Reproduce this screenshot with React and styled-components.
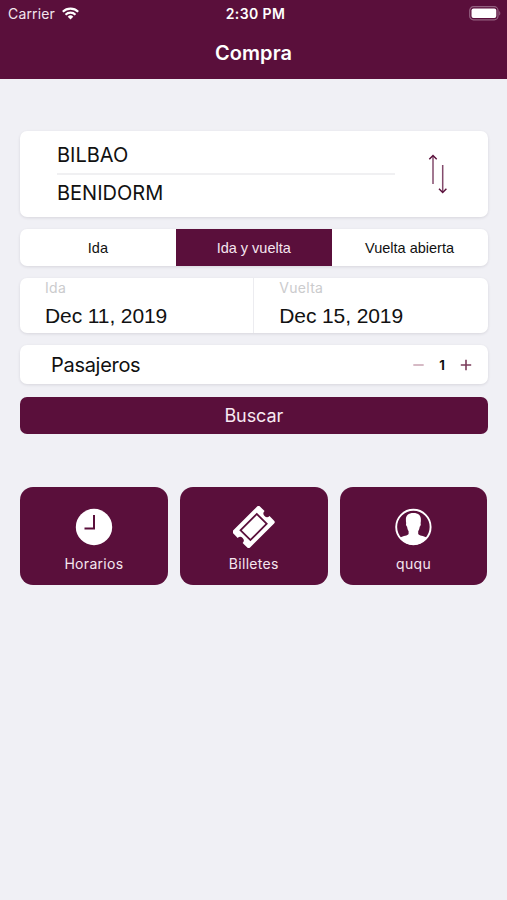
import React, { useState } from 'react';
import styled, { createGlobalStyle, css } from 'styled-components';

const BRAND = '#5a0f3b';
const SYSTEM_FONT = "Inter, 'Liberation Sans', sans-serif";
const HELVETICA = "'Liberation Sans', Arial, sans-serif";

const GlobalStyle = createGlobalStyle`
  * {
    box-sizing: border-box;
  }
  body {
    margin: 0;
    background: #f0f0f5;
    font-family: ${SYSTEM_FONT};
    color: #111;
  }
  button {
    border: 0;
    padding: 0;
    margin: 0;
    background: none;
    font: inherit;
    color: inherit;
  }
`;

const Screen = styled.div`
  min-height: 900px;
  background: #f0f0f5;
`;

const Header = styled.header`
  height: 79px;
  background: ${BRAND};
  color: #fff;
`;

const StatusBar = styled.div`
  display: grid;
  grid-template-columns: 1fr auto 1fr;
  align-items: center;
  height: 26px;
  padding: 0 6px 0 8px;
`;

const Carrier = styled.div`
  display: flex;
  align-items: center;
  gap: 7px;
  font-size: 14px;
  letter-spacing: 0.15px;
  color: #f3e6ee;
`;

const Clock = styled.div`
  font-size: 14px;
  font-weight: 600;
  letter-spacing: 0.4px;
  padding-left: 2px;
`;

const Battery = styled.svg`
  justify-self: end;
`;

const Title = styled.h1`
  margin: 0;
  line-height: 54px;
  font-size: 20px;
  font-weight: 600;
  letter-spacing: 0.1px;
  text-align: center;
`;

const Main = styled.main`
  display: flex;
  flex-direction: column;
  padding: 52px 19.5px 0 20px;
`;

const Card = styled.section`
  display: flex;
  background: #fff;
  border-radius: 7px;
  box-shadow: 0 1px 3px rgba(40, 30, 60, 0.12);
  margin-bottom: 12px;
`;

const RouteCard = styled(Card)`
  height: 86px;
  align-items: center;
  padding: 0 40px 0 37px;
  justify-content: space-between;
`;

const Stations = styled.div`
  width: 338px;
  padding-bottom: 2px;
`;

const Station = styled.div`
  height: 37px;
  line-height: 38px;
  font-size: 20px;

  & + & {
    border-top: 2px solid #f0f0f2;
    line-height: 36px;
  }
`;

const SegmentCard = styled(Card)`
  height: 37px;
  overflow: hidden;
`;

const Segment = styled.button`
  flex: 1;
  padding-top: 1px;
  font-family: ${HELVETICA};
  font-size: 14.5px;

  ${(p) => p.$active && css`
    background: ${BRAND};
    color: #f5e6ef;
  `}
`;

const DateCard = styled(Card)`
  height: 55px;
`;

const DateField = styled.div`
  flex: 1;
  padding-left: 25px;
  font-family: ${HELVETICA};

  & + & {
    border-left: 1px solid #ececf0;
  }
`;

const DateLabel = styled.div`
  height: 20px;
  line-height: 20px;
  font-family: ${SYSTEM_FONT};
  font-size: 14px;
  letter-spacing: 0.3px;
  color: #cbcbcd;
`;

const DateValue = styled.div`
  line-height: 35px;
  font-size: 21px;
  letter-spacing: -0.1px;
`;

const PassengerCard = styled(Card)`
  height: 39px;
  align-items: center;
  justify-content: space-between;
  padding: 0 15.5px 0 31px;
  font-size: 20px;
  letter-spacing: -0.3px;
`;

const Stepper = styled.div`
  display: flex;
  align-items: center;
  gap: 15.5px;
  font-size: 13px;
  font-weight: 700;
`;

const StepButton = styled.button`
  display: flex;
`;

const SearchButton = styled.button`
  height: 37px;
  border-radius: 7px;
  background: ${BRAND};
  color: #f8e9f2;
  margin-top: 1px;
  font-size: 18px;
  letter-spacing: -0.1px;
`;

const Tiles = styled.div`
  display: grid;
  grid-template-columns: repeat(3, 1fr);
  gap: 12px;
  margin-top: 53px;
`;

const Tile = styled.button`
  display: flex;
  flex-direction: column;
  align-items: center;
  height: 98px;
  padding-top: 19px;
  border-radius: 13px;
  background: ${BRAND};
  color: #f5e6ef;
  font-size: 14px;
  line-height: 22px;
  letter-spacing: 0.3px;

  svg {
    margin-bottom: 5px;
  }
`;

const WifiIcon = () => (
  <svg width="17" height="13" viewBox="0 0 17 13" fill="none" stroke="#fff" strokeWidth="2.1">
    <path d="M.8 4.8a10.9 10.9 0 0 1 15.4 0" />
    <path d="M3.5 7.7a7.1 7.1 0 0 1 10 0" />
    <path d="M8.5 12.5 5.7 9.7a4 4 0 0 1 5.6 0z" fill="#fff" stroke="none" />
  </svg>
);

const BatteryIcon = () => (
  <Battery width="32" height="15" viewBox="0 0 32 15">
    <rect x=".7" y=".7" width="28.3" height="13.1" rx="3.8" fill="none" stroke="#936180" strokeWidth="1.2" />
    <rect x="2.5" y="2.5" width="24.8" height="9.5" rx="2" fill="#fff" />
    <path d="M30.2 5v4.6c1.5-.7 1.5-3.9 0-4.6z" fill="#936180" />
  </Battery>
);

const SwapIcon = () => (
  <svg width="20" height="40" viewBox="0 0 20 40" fill="none" stroke={BRAND}>
    <path d="M5 2v28M14.7 11v27" strokeWidth="1.5" opacity=".75" />
    <path d="M1.3 5.3 5 1.4l3.7 3.9M11 34.7l3.7 3.9 3.7-3.9" strokeWidth="1.4" />
  </svg>
);

const ClockIcon = () => (
  <svg width="42" height="42" viewBox="0 0 42 42">
    <circle cx="21" cy="21" r="18.2" fill="#fff" />
    <path d="M21 9v13.5h-9.5" fill="none" stroke={BRAND} strokeWidth="2" />
  </svg>
);

const TicketIcon = () => (
  <svg width="42" height="42" viewBox="0 0 42 42">
    <g transform="translate(20.6 21) rotate(-45)">
      <path
        d="M-17-12h34a2 2 0 0 1 2 2v6.5a3.5 3.5 0 0 0 0 7V10a2 2 0 0 1-2 2h-34a2 2 0 0 1-2-2V3.500a3.5 3.5 0 0 0 0-7V-10a2 2 0 0 1 2-2z"
        fill="#fff"
      />
      <rect x="-11.5" y="-7" width="23" height="14" fill="none" stroke={BRAND} strokeWidth="1.8" />
    </g>
  </svg>
);

const UserIcon = () => (
  <svg width="42" height="42" viewBox="0.6 0 42 42">
    <circle cx="21" cy="21" r="17.2" fill="none" stroke="#fff" strokeWidth="1.9" />
    <path
      d="M21 7c-5 0-7.7 2.4-7.5 6.8 0 1.5.1 2.5.3 3.5-.5.7-.1 2.9.9 3.4.3 2.2.9 3.600 1.500 4.400v2.900c-.9 1.700-5.200 1.700-8.500 3.500C10.600 36 15.300 39 21 39s10.400-3 13.300-7.500c-3.300-1.800-7.600-1.800-8.500-3.500v-2.900c.6-.8 1.200-2.200 1.500-4.400 1-.5 1.400-2.700.9-3.400.2-1 .3-2 .3-3.500C28.700 9.400 26 7 21 7z"
      fill="#fff"
    />
  </svg>
);

const MinusIcon = () => (
  <svg width="11" height="12" viewBox="0 0 11 12" stroke="#c9a3b2" strokeWidth="1.5">
    <path d="M.3 6h10.4" />
  </svg>
);

const PlusIcon = () => (
  <svg width="12" height="12" viewBox="0 0 12 12" stroke="#7b3c5b" strokeWidth="1.6">
    <path d="M.8 6h10.4M6 .8v10.4" />
  </svg>
);

const TRIP_TYPES = ['Ida', 'Ida y vuelta', 'Vuelta abierta'];

const SHORTCUTS = [
  { label: 'Horarios', Icon: ClockIcon },
  { label: 'Billetes', Icon: TicketIcon },
  { label: 'ququ', Icon: UserIcon },
];

export default function App() {
  const [trip, setTrip] = useState('Ida y vuelta');
  const [passengers, setPassengers] = useState(1);

  return (
    <>
      <GlobalStyle />
      <Screen>
        <Header>
          <StatusBar>
            <Carrier>
              Carrier
              <WifiIcon />
            </Carrier>
            <Clock>2:30 PM</Clock>
            <BatteryIcon />
          </StatusBar>
          <Title>Compra</Title>
        </Header>
        <Main>
          <RouteCard>
            <Stations>
              <Station>BILBAO</Station>
              <Station>BENIDORM</Station>
            </Stations>
            <SwapIcon />
          </RouteCard>
          <SegmentCard>
            {TRIP_TYPES.map((type) => (
              <Segment key={type} $active={type === trip} onClick={() => setTrip(type)}>
                {type}
              </Segment>
            ))}
          </SegmentCard>
          <DateCard>
            <DateField>
              <DateLabel>Ida</DateLabel>
              <DateValue>Dec 11, 2019</DateValue>
            </DateField>
            <DateField>
              <DateLabel>Vuelta</DateLabel>
              <DateValue>Dec 15, 2019</DateValue>
            </DateField>
          </DateCard>
          <PassengerCard>
            Pasajeros
            <Stepper>
              <StepButton aria-label="Menos" onClick={() => setPassengers(Math.max(1, passengers - 1))}>
                <MinusIcon />
              </StepButton>
              {passengers}
              <StepButton aria-label="Más" onClick={() => setPassengers(passengers + 1)}>
                <PlusIcon />
              </StepButton>
            </Stepper>
          </PassengerCard>
          <SearchButton>Buscar</SearchButton>
          <Tiles>
            {SHORTCUTS.map(({ label, Icon }) => (
              <Tile key={label}>
                <Icon />
                {label}
              </Tile>
            ))}
          </Tiles>
        </Main>
      </Screen>
    </>
  );
}
